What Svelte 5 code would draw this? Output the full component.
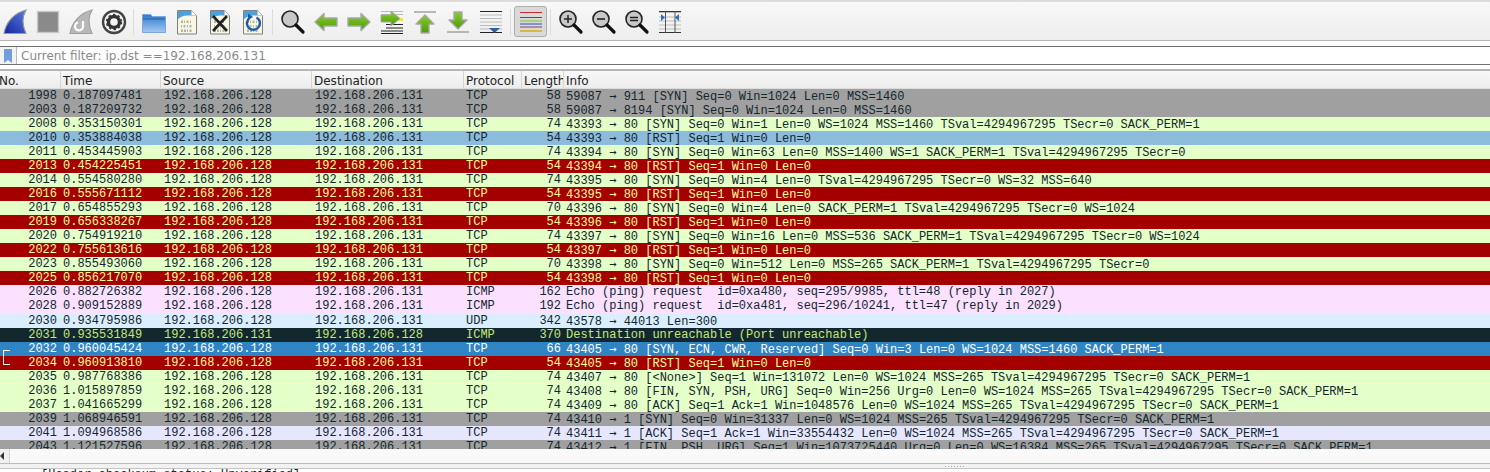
<script>
	const a = '192.168.206.128';
	const b = '192.168.206.131';
	// class, no, time, proto, length, info
	const rows = [
		['gray', 1998, '0.187097481', 'TCP', 58, '59087 → 911 [SYN] Seq=0 Win=1024 Len=0 MSS=1460'],
		['gray', 2003, '0.187209732', 'TCP', 58, '59087 → 8194 [SYN] Seq=0 Win=1024 Len=0 MSS=1460'],
		['green', 2008, '0.353150301', 'TCP', 74, '43393 → 80 [SYN] Seq=0 Win=1 Len=0 WS=1024 MSS=1460 TSval=4294967295 TSecr=0 SACK_PERM=1'],
		['blue', 2010, '0.353884038', 'TCP', 54, '43393 → 80 [RST] Seq=1 Win=0 Len=0'],
		['green', 2011, '0.453445903', 'TCP', 74, '43394 → 80 [SYN] Seq=0 Win=63 Len=0 MSS=1400 WS=1 SACK_PERM=1 TSval=4294967295 TSecr=0'],
		['red', 2013, '0.454225451', 'TCP', 54, '43394 → 80 [RST] Seq=1 Win=0 Len=0'],
		['green', 2014, '0.554580280', 'TCP', 74, '43395 → 80 [SYN] Seq=0 Win=4 Len=0 TSval=4294967295 TSecr=0 WS=32 MSS=640'],
		['red', 2016, '0.555671112', 'TCP', 54, '43395 → 80 [RST] Seq=1 Win=0 Len=0'],
		['green', 2017, '0.654855293', 'TCP', 70, '43396 → 80 [SYN] Seq=0 Win=4 Len=0 SACK_PERM=1 TSval=4294967295 TSecr=0 WS=1024'],
		['red', 2019, '0.656338267', 'TCP', 54, '43396 → 80 [RST] Seq=1 Win=0 Len=0'],
		['green', 2020, '0.754919210', 'TCP', 74, '43397 → 80 [SYN] Seq=0 Win=16 Len=0 MSS=536 SACK_PERM=1 TSval=4294967295 TSecr=0 WS=1024'],
		['red', 2022, '0.755613616', 'TCP', 54, '43397 → 80 [RST] Seq=1 Win=0 Len=0'],
		['green', 2023, '0.855493060', 'TCP', 70, '43398 → 80 [SYN] Seq=0 Win=512 Len=0 MSS=265 SACK_PERM=1 TSval=4294967295 TSecr=0'],
		['red', 2025, '0.856217070', 'TCP', 54, '43398 → 80 [RST] Seq=1 Win=0 Len=0'],
		['pink', 2026, '0.882726382', 'ICMP', 162, 'Echo (ping) request  id=0xa480, seq=295/9985, ttl=48 (reply in 2027)'],
		['pink', 2028, '0.909152889', 'ICMP', 192, 'Echo (ping) request  id=0xa481, seq=296/10241, ttl=47 (reply in 2029)'],
		['sky', 2030, '0.934795986', 'UDP', 342, '43578 → 44013 Len=300'],
		['dark', 2031, '0.935531849', 'ICMP', 370, 'Destination unreachable (Port unreachable)'],
		['selected', 2032, '0.960045424', 'TCP', 66, '43405 → 80 [SYN, ECN, CWR, Reserved] Seq=0 Win=3 Len=0 WS=1024 MSS=1460 SACK_PERM=1'],
		['red', 2034, '0.960913810', 'TCP', 54, '43405 → 80 [RST] Seq=1 Win=0 Len=0'],
		['green', 2035, '0.987768386', 'TCP', 74, '43407 → 80 [<None>] Seq=1 Win=131072 Len=0 WS=1024 MSS=265 TSval=4294967295 TSecr=0 SACK_PERM=1'],
		['green', 2036, '1.015897859', 'TCP', 74, '43408 → 80 [FIN, SYN, PSH, URG] Seq=0 Win=256 Urg=0 Len=0 WS=1024 MSS=265 TSval=4294967295 TSecr=0 SACK_PERM=1'],
		['green', 2037, '1.041665299', 'TCP', 74, '43409 → 80 [ACK] Seq=1 Ack=1 Win=1048576 Len=0 WS=1024 MSS=265 TSval=4294967295 TSecr=0 SACK_PERM=1'],
		['gray', 2039, '1.068946591', 'TCP', 74, '43410 → 1 [SYN] Seq=0 Win=31337 Len=0 WS=1024 MSS=265 TSval=4294967295 TSecr=0 SACK_PERM=1'],
		['lav', 2041, '1.094968586', 'TCP', 74, '43411 → 1 [ACK] Seq=1 Ack=1 Win=33554432 Len=0 WS=1024 MSS=265 TSval=4294967295 TSecr=0 SACK_PERM=1'],
		['gray', 2043, '1.121527596', 'TCP', 74, '43412 → 1 [FIN, PSH, URG] Seq=1 Win=1073725440 Urg=0 Len=0 WS=16384 MSS=265 TSval=4294967295 TSecr=0 SACK_PERM=1']
	];
</script>

{#snippet fin(fill, edge)}
	<path d="M3 25.500C5 14 13 5 25 2c-4 7-4 15 0 23.500z" fill={fill} stroke={edge} stroke-width="1.2" />
{/snippet}

{#snippet page()}
	<path d="M4.500 2.500h14l5 5v18.500h-19z" fill="#f8f7e4" stroke="#808080" />
	<path d="M5 3h13.500v4.500H14c-3 0-6 1-9 3.500z" fill="#4aa3e0" />
	<path d="M18.500 2.500v5h5z" fill="#fff" stroke="#aaa" stroke-width=".6" />
	<g fill="#b4b4a2">
		<rect x="8" y="12.500" width="2" height="2.500" /><rect x="11" y="12.500" width="1" height="2.500" /><rect x="13.500" y="12.500" width="2" height="2.500" /><rect x="17" y="12.500" width="1" height="2.500" />
		<rect x="8" y="17" width="1" height="2.500" /><rect x="10.500" y="17" width="2" height="2.500" /><rect x="14" y="17" width="1" height="2.500" /><rect x="16.500" y="17" width="2" height="2.500" />
		<rect x="8" y="21.500" width="2" height="2.500" /><rect x="11" y="21.500" width="2" height="2.500" /><rect x="14" y="21.500" width="1" height="2.500" /><rect x="16.500" y="21.500" width="2" height="2.500" />
	</g>
{/snippet}

{#snippet lens()}
	<circle cx="11" cy="11" r="8" fill="#c8c8c8" stroke="#222" stroke-width="1.6" />
	<path d="M17 17l7 7" stroke="#111" stroke-width="3.200" stroke-linecap="round" />
{/snippet}

{#snippet arrow(d)}
	<path d={d} fill="url(#green)" stroke="#a8a8a8" stroke-width="1.4" stroke-linejoin="round" />
{/snippet}

<div class="app">
	<svg class="defs" width="0" height="0">
		<defs>
			<linearGradient id="green" x1="0" y1="0" x2="0" y2="1"><stop offset="0" stop-color="#86cf2a" /><stop offset="1" stop-color="#4d9a08" /></linearGradient>
			<linearGradient id="sharkblue" x1="1" y1="0" x2="0" y2="1"><stop offset="0" stop-color="#5c7ce0" /><stop offset="1" stop-color="#12269c" /></linearGradient>
			<linearGradient id="folder" x1="0" y1="0" x2="0" y2="1"><stop offset="0" stop-color="#2f78cc" /><stop offset="1" stop-color="#a4c9f0" /></linearGradient>
		</defs>
	</svg>

	<div class="toolbar">
		<span class="tool"><svg viewBox="0 0 28 28">{@render fin('url(#sharkblue)', '#9a9a9a')}</svg></span>
		<span class="tool"><svg viewBox="0 0 28 28"><rect x="3.500" y="3.500" width="21" height="21" fill="#8a8a8a" stroke="#c8c8c8" stroke-width="1.4" /></svg></span>
		<span class="tool"><svg viewBox="0 0 28 28">{@render fin('#b8b8b8', '#a0a0a0')}<path d="M16 13v5a4 4 0 1 1-5-3.500" fill="none" stroke="#fff" stroke-width="2.200" /></svg></span>
		<span class="tool"><svg viewBox="0 0 28 28"><circle cx="14" cy="14" r="11" fill="#f4f4f4" stroke="#444" stroke-width="2.400" /><circle cx="14" cy="14" r="5.500" fill="none" stroke="#333" stroke-width="3.400" /><circle cx="14" cy="14" r="7.400" fill="none" stroke="#333" stroke-width="1.600" stroke-dasharray="2.400 2.400" /></svg></span>
		<span class="sep"></span>
		<span class="tool"><svg viewBox="0 0 28 28"><path d="M2.500 8V6.500h8l2 2h13v16h-23z" fill="url(#folder)" stroke="#7aa8de" /><path d="M3 11h22" stroke="#1f5fb0" stroke-width="1" /></svg></span>
		<span class="tool"><svg viewBox="0 0 28 28">{@render page()}</svg></span>
		<span class="tool"><svg viewBox="0 0 28 28">{@render page()}<path d="M7 8l14 15M21 8L7 23" stroke="#222" stroke-width="2.600" /></svg></span>
		<span class="tool"><svg viewBox="0 0 28 28">{@render page()}<path d="M17.500 9.500a6.500 6.500 0 1 1-7 .5" fill="none" stroke="#1f5aa8" stroke-width="2.400" /><path d="M9 5.500l5 3.500-5 3z" fill="#1f5aa8" /></svg></span>
		<span class="sep"></span>
		<span class="tool"><svg viewBox="0 0 28 28">{@render lens()}</svg></span>
		<span class="tool"><svg viewBox="0 0 28 28">{@render arrow('M3 14l9-8.500v4.500h13v8H12v4.500z')}</svg></span>
		<span class="tool"><svg viewBox="0 0 28 28">{@render arrow('M25 14l-9-8.500v4.500H3v8h13v4.500z')}</svg></span>
		<span class="tool"><svg viewBox="0 0 28 28"><path d="M3 3.500h22M3 6.500h22" stroke="#bbb" /><path d="M16 10h9v3h-9z" fill="#f6e04a" /><path d="M8 16.500h17M8 20h17M3 23h22M3 25.500h22" stroke="#222" /><path d="M3 7h10V3l9 7.500-9 7.500v-4H3z" fill="url(#green)" stroke="#a8a8a8" /></svg></span>
		<span class="tool"><svg viewBox="0 0 28 28"><path d="M3 4h22" stroke="#a8a8a8" stroke-width="1.600" />{@render arrow('M14 7l9 9h-5v9h-8v-9H5z')}</svg></span>
		<span class="tool"><svg viewBox="0 0 28 28">{@render arrow('M14 21l9-9h-5V4h-8v8H5z')}<path d="M3 24h22" stroke="#a8a8a8" stroke-width="1.600" /></svg></span>
		<span class="tool"><svg viewBox="0 0 28 28"><path d="M3 3.500h22" stroke="#222" /><path d="M3 7h22M3 10.500h22M3 14h22M3 17.500h22M3 21h22" stroke="#bbb" /><path d="M3 24.500h22" stroke="#222" /><path d="M12 20h11l-5.500 5z" fill="#2f5f9f" /></svg></span>
		<span class="sep"></span>
		<span class="tool active"><svg viewBox="0 0 28 28">
			<path d="M3 4.500h22" stroke="#c82828" /><path d="M3 9.500h22" stroke="#2f50c0" /><path d="M3 13h22" stroke="#7cc040" /><path d="M3 16h22" stroke="#2f50a8" /><path d="M3 19h22" stroke="#704878" /><path d="M3 23h22" stroke="#d8a800" stroke-width="1.400" />
		</svg></span>
		<span class="sep"></span>
		<span class="tool"><svg viewBox="0 0 28 28">{@render lens()}<path d="M7 11h8M11 7v8" stroke="#222" stroke-width="1.500" /></svg></span>
		<span class="tool"><svg viewBox="0 0 28 28">{@render lens()}<path d="M7 11h8" stroke="#222" stroke-width="1.600" /></svg></span>
		<span class="tool"><svg viewBox="0 0 28 28">{@render lens()}<path d="M7 9.500h8M7 12.500h8" stroke="#222" stroke-width="1.400" /></svg></span>
		<span class="tool"><svg viewBox="0 0 28 28"><path d="M3 4.500h22M3 9h22M3 13h22M3 17h22M3 21h22" stroke="#bbb" /><path d="M3 3.500h22M3 24.500h22" stroke="#333" /><path d="M9.500 3v22M19 3v22" stroke="#555" /><path d="M5 6l4 3.500-4 3.500zM23 6l-4 3.500 4 3.500z" fill="#2f6fc0" /></svg></span>
	</div>

	<div class="filter">
		<span class="bookmark"><svg viewBox="0 0 10 16" width="10" height="16"><path d="M1 1h8v14l-4-3-4 3z" fill="#6f9fd8" /></svg></span>
		<span class="filter-text">Current filter: ip.dst ==192.168.206.131</span>
	</div>

	<div class="head cols">
		<span class="no-head">No.</span>
		<span>Time</span>
		<span>Source</span>
		<span>Destination</span>
		<span>Protocol</span>
		<span>Length</span>
		<span>Info</span>
	</div>

	<div class="list">
		{#each rows as [kind, no, time, proto, len, info]}
			<div class="row cols {kind}">
				<span class="no">{no}{#if no === 2032}<i class="bracket top"></i>{/if}{#if no === 2034}<i class="bracket bottom"></i>{/if}</span>
				<span class="time">{time}</span>
				<span>{no === 2031 ? b : a}</span>
				<span>{no === 2031 ? a : b}</span>
				<span class="proto">{proto}</span>
				<span class="len">{len}</span>
				<span class="info">{#each String(info).split('→') as part, i}{#if i > 0}<b class="arrow">→</b>{/if}{part}{/each}</span>
			</div>
		{/each}
	</div>

	<div class="scroll">
		<span class="scroll-left"><svg viewBox="0 0 5 8" width="5" height="8"><path d="M4 0v8L0 4z" fill="#333" /></svg></span>
	</div>
	<div class="splitter"><span class="grip"></span></div>

	<div class="details">
		<span>[Header checksum status: Unverified]</span>
	</div>
</div>

<style>
	:global(body) {
		margin: 0;
		background: #fff;
	}
	.app {
		width: 1490px;
		height: 472px;
		overflow: hidden;
		display: flex;
		flex-direction: column;
	}
	.defs {
		position: absolute;
	}
	.toolbar {
		box-sizing: border-box;
		height: 41px;
		flex: none;
		display: flex;
		align-items: center;
		padding: 1px 0 0 0;
		border-top: 2px solid #dcdcdc;
		border-bottom: 1px solid #b4b4b4;
		background: linear-gradient(#f8f8f8, #eeeeee);
	}
	.tool {
		flex: none;
		width: 33px;
		height: 31px;
		display: flex;
		align-items: center;
		justify-content: center;
		box-sizing: border-box;
	}
	.tool:first-child {
		margin-left: -2px;
	}
	.tool svg {
		width: 28px;
		height: 28px;
		flex: none;
	}
	.tool.active {
		background: #d9d9d9;
		border: 1px solid #aeaeae;
		border-radius: 3px;
	}
	.sep {
		flex: none;
		width: 7px;
		height: 26px;
		box-sizing: border-box;
		border-left: 1px solid #dcdcdc;
		margin-left: 3px;
		margin-right: -3px;
	}
	.filter {
		box-sizing: border-box;
		flex: none;
		height: 19px;
		margin-top: 5px;
		display: flex;
		align-items: center;
		background: #fff;
		border-top: 1px solid #707070;
		border-bottom: 1px solid #707070;
	}
	.bookmark {
		width: 17px;
		height: 17px;
		display: flex;
		align-items: center;
		justify-content: center;
		box-sizing: border-box;
		border-right: 1px solid #bbb;
		background: #f2f2f2;
	}
	.filter-text {
		margin-left: 4px;
		font: 12px "DejaVu Sans", sans-serif;
		color: #8a8a8a;
	}
	.cols {
		display: grid;
		grid-template-columns: 60px 100px 151px 152px 58px 42px 1fr;
	}
	.head {
		box-sizing: border-box;
		flex: none;
		height: 20px;
		margin-top: 4px;
		border-top: 2px solid #b4b4b4;
		border-bottom: 1px solid #dcdcdc;
		background: linear-gradient(#f8f8f8, #ececec);
		font: 12px/14px "DejaVu Sans", sans-serif;
		color: #222;
		grid-template-rows: 17px;
	}
	.head span {
		box-sizing: border-box;
		padding: 3px 0 0 2px;
		border-left: 1px solid #d4d4d4;
		overflow: hidden;
		white-space: nowrap;
	}
	.head .no-head {
		border-left: 0;
		padding-left: 0;
		margin-left: -1px;
	}
	.list {
		flex: none;
		height: 360px;
		overflow: hidden;
		font: 12px/15px "Liberation Mono", monospace;
	}
	.row {
		height: 14.04px;
		color: #12272e;
		white-space: pre;
	}
	.row span {
		padding-left: 4px;
	}
	.row .time,
	.row .proto,
	.row .info {
		padding-left: 3px;
	}
	.row .no {
		position: relative;
		padding: 0 3px 0 0;
		text-align: right;
	}
	.row .len {
		padding: 0 2px 0 0;
		text-align: right;
	}
	.arrow {
		font-family: "DejaVu Sans Mono", monospace;
		font-weight: normal;
	}
	.gray { background: #a0a0a0; }
	.green { background: #e4ffc7; }
	.blue { background: #8dbbdc; }
	.pink { background: #fce0ff; }
	.sky { background: #daeeff; }
	.lav { background: #e7e6ff; }
	.red { background: #a40000; color: #fffc9c; }
	.dark { background: #12272e; color: #c3e87c; }
	.selected { background: #2f84c4; color: #fff; }
	.bracket {
		position: absolute;
		left: 3px;
		width: 7px;
		border-left: 1px solid #fff;
		box-sizing: border-box;
	}
	.bracket.top {
		top: 8px;
		height: 7px;
		border-top: 1px solid #fff;
	}
	.bracket.bottom {
		top: 0;
		height: 9px;
		border-bottom: 1px solid #fff;
	}
	.scroll {
		box-sizing: border-box;
		flex: none;
		height: 15px;
		display: flex;
		align-items: center;
		background: #f9f9f9;
		border-bottom: 1px solid #bcbcbc;
	}
	.scroll-left {
		box-sizing: border-box;
		width: 10px;
		height: 14px;
		display: flex;
		align-items: center;
		background: #f0f0f0;
		border-right: 1px solid #d4d4d4;
	}
	.splitter {
		flex: none;
		height: 4px;
		display: flex;
		justify-content: center;
		align-items: center;
		padding-left: 420px;
		background: #f2f2f2;
	}
	.grip {
		width: 20px;
		height: 1px;
		background: repeating-linear-gradient(90deg, #aaa 0 1px, transparent 1px 3px);
	}
	.details {
		flex: none;
		padding-left: 41px;
		height: 4px;
		overflow: hidden;
		background: #fff;
		font: 12px/12px "Liberation Mono", monospace;
		color: #222;
		border-top: 1px solid #c4c4c4;
	}
</style>
